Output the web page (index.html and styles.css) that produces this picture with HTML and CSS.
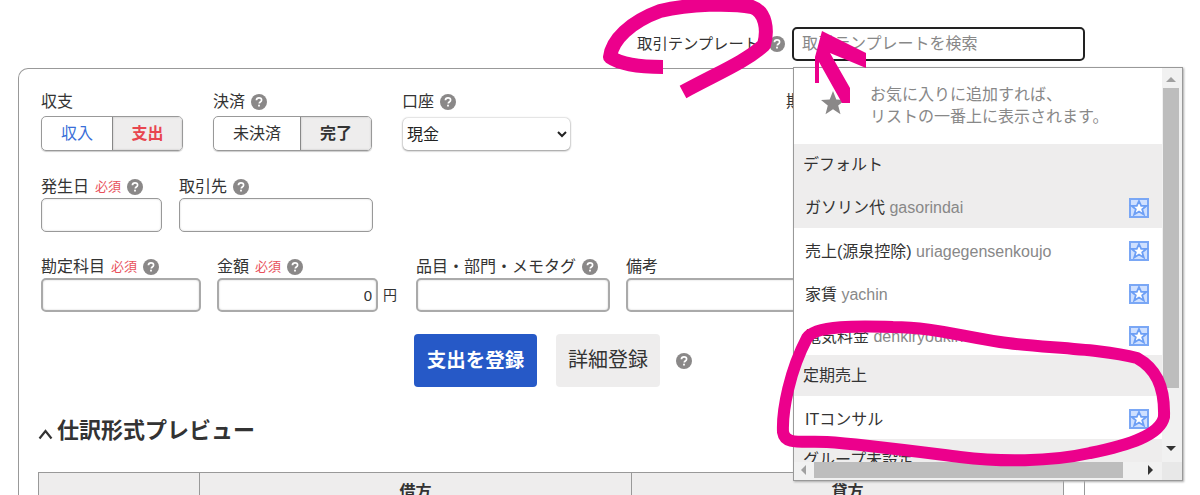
FILE: index.html
```html
<!DOCTYPE html>
<html lang="ja">
<head>
<meta charset="utf-8">
<title>取引テンプレート</title>
<link rel="stylesheet" href="styles.css">
</head>
<body>
<svg width="0" height="0" class="defs">
  <symbol id="help" viewBox="0 0 16 16"><circle cx="8" cy="8" r="8" fill="#8a8888"/><path d="M5.4 6.2C5.5 4.6 6.6 3.8 8 3.8c1.500 0 2.600.9 2.600 2.200 0 1-.6 1.500-1.300 2-.7.5-1 .8-1 1.600" fill="none" stroke="#fff" stroke-width="1.700"/><rect x="7.100" y="10.700" width="1.800" height="1.800" fill="#fff"/></symbol>
  <symbol id="fav" viewBox="0 0 20 20"><rect x="1" y="1" width="18" height="18" fill="#cfe0ff" stroke="#7aa7f5" stroke-width="2"/><path d="M10 3l2.200 4.800h5.200l-4.200 3.400 1.600 5.400-4.800-3-4.800 3 1.600-5.400-4.200-3.400h5.200z" fill="#fff" stroke="#6d9ff5" stroke-width="1.800"/></symbol>
</svg>
<header class="topbar">
  <span class="top-label">取引テンプレート</span>
  <svg class="help"><use href="#help"/></svg>
  <input class="search" placeholder="取引テンプレートを検索">
</header>
<main class="card">
  <div class="row row-1">
    <div class="field">
      <div class="label">収支</div>
      <div class="seg seg-a"><span class="seg-item income">収入</span><span class="seg-item on expense">支出</span></div>
    </div>
    <div class="field">
      <div class="label">決済 <svg class="help"><use href="#help"/></svg></div>
      <div class="seg seg-b"><span class="seg-item pending">未決済</span><span class="seg-item on done">完了</span></div>
    </div>
    <div class="field">
      <div class="label">口座 <svg class="help"><use href="#help"/></svg></div>
      <select class="account"><option>現金</option></select>
    </div>
    <div class="field hidden-field">
      <div class="label">期日</div>
    </div>
  </div>
  <div class="row row-2">
    <div class="field w-date">
      <div class="label">発生日 <em class="req">必須</em> <svg class="help"><use href="#help"/></svg></div>
      <input class="box">
    </div>
    <div class="field w-partner">
      <div class="label">取引先 <svg class="help"><use href="#help"/></svg></div>
      <input class="box">
    </div>
  </div>
  <div class="row row-3">
    <div class="field w-account">
      <div class="label">勘定科目 <em class="req">必須</em> <svg class="help"><use href="#help"/></svg></div>
      <input class="box">
    </div>
    <div class="field w-amount">
      <div class="label">金額 <em class="req">必須</em> <svg class="help"><use href="#help"/></svg></div>
      <div class="amount"><input class="box num" value="0"><span class="yen">円</span></div>
    </div>
    <div class="field w-tags">
      <div class="label">品目・部門・メモタグ <svg class="help"><use href="#help"/></svg></div>
      <input class="box">
    </div>
    <div class="field w-note">
      <div class="label">備考</div>
      <input class="box">
    </div>
  </div>
  <div class="actions">
    <button class="btn primary">支出を登録</button>
    <button class="btn secondary">詳細登録</button>
    <svg class="help"><use href="#help"/></svg>
  </div>
  <h2 class="preview"><svg class="chev" viewBox="0 0 15 12"><path d="M1.500 10.500L7.500 3l6 7.500" fill="none" stroke="#333" stroke-width="2.200"/></svg>仕訳形式プレビュー</h2>
  <div class="table">
    <div class="th"></div><div class="th">借方</div><div class="th">貸方</div>
  </div>
</main>
<aside class="dropdown">
  <div class="list">
    <div class="hint">
      <svg class="big-star" viewBox="0 0 24 24"><path d="M12 0l3.300 8.400 8.700.5-6.800 5.600 2.300 8.700L12 18.300 4.500 23.200l2.300-8.700L0 8.900l8.700-.5z" fill="#8a8888"/></svg>
      <p>お気に入りに追加すれば、<br>リストの一番上に表示されます。</p>
    </div>
    <div class="group">デフォルト</div>
    <div class="item hover"><span>ガソリン代 <i>gasorindai</i></span><svg class="fav"><use href="#fav"/></svg></div>
    <div class="item"><span>売上(源泉控除) <i>uriagegensenkoujo</i></span><svg class="fav"><use href="#fav"/></svg></div>
    <div class="item"><span>家賃 <i>yachin</i></span><svg class="fav"><use href="#fav"/></svg></div>
    <div class="item tight"><span>電気料金 <i>denkiryoukin</i></span><svg class="fav"><use href="#fav"/></svg></div>
    <div class="group short">定期売上</div>
    <div class="item"><span>ITコンサル</span><svg class="fav"><use href="#fav"/></svg></div>
    <div class="group last">グループ未設定</div>
  </div>
  <div class="vbar"><b class="arrow up"></b><div class="vthumb"></div><b class="arrow down"></b></div>
  <div class="hbar"><b class="arrow left"></b><div class="hthumb"></div><b class="arrow right"></b></div>
  <div class="corner"></div>
</aside>
<svg class="ink" viewBox="0 0 1200 495">
  <path d="M663 67C640 67 620 64 610 57C612 40 630 22 660 11C690 4 730 3 752 7C766 12 768 30 764 45C745 62 720 72 683 92" />
  <path class="fill" d="M815 57L822 31L866 53V68L830 53L850 88V103H842L819 62V83H815Z" />
  <path class="loop" d="M807 338C815 325 860 326 893 327C930 327 960 336 1000 342C1040 348 1100 348 1137 358C1155 368 1165 385 1164 417C1160 435 1130 445 1090 453C1050 462 1000 462 960 457C920 452 860 444 827 442C800 441 785 445 783 432C782 410 790 370 807 338Z" />
</svg>
</body>
</html>
```
FILE: styles.css
```css
* { box-sizing: border-box; }
html, body { margin: 0; height: 495px; overflow: hidden; background: #fff; }
body { position: relative; font: 16px/1.2 "Liberation Sans", "Noto Sans CJK JP", sans-serif; color: #333; }
.defs { position: absolute; }
.help { width: 16px; height: 16px; flex: none; }
.topbar { height: 68px; width: 1085px; display: flex; justify-content: flex-end; align-items: flex-start; gap: 7px; padding-top: 27px; }
.top-label { margin: 8px 3px 0 0; font-size: 15.3px; }
.topbar .help { margin-top: 9px; }
.search { width: 293px; height: 34px; border: 2px solid #222; border-radius: 5px; padding: 0 8px; font: inherit; outline: 0; }
.search::placeholder { color: #888; opacity: 1; }
.card { margin-left: 18px; width: 1067px; height: 427px; overflow: hidden; border: 1px solid #999; border-bottom: 0; border-radius: 10px 10px 0 0; padding: 24px 20px 0 22px; }
.row { display: flex; }
.row-1 { gap: 30px; height: 85px; }
.row-2 { gap: 17px; height: 80px; }
.row-3 { gap: 16px; height: 76px; }
.label { height: 20px; padding-bottom: 2px; display: flex; align-items: center; gap: 6px; white-space: nowrap; }
.row-1 .label { height: 23px; padding-bottom: 6px; }
.req { font-style: normal; font-size: 13px; color: #e8505b; }
.seg { display: flex; height: 35px; border: 1px solid #999; border-radius: 5px; overflow: hidden; box-shadow: 0 1px 1px #ccc; }
.seg-item { display: flex; align-items: center; justify-content: center; }
.seg .on { background: #eeeded; border-left: 1px solid #888; font-weight: 700; box-shadow: inset 0 0 2px #bbb; }
.seg-a { width: 142px; }
.seg-a .income { width: 70px; color: #3a6fd8; }
.seg-a .expense { flex: 1; color: #e8464f; }
.seg-b { width: 159px; }
.seg-b .pending { width: 86px; }
.seg-b .done { flex: 1; }
.account { display: block; width: 167px; height: 32px; margin: 2px 0 0 1px; border: 0; border-radius: 5px; background: #fff; box-shadow: 0 0 2px #aaa, 0 1px 2px #999; font: 16px "Liberation Sans", "Noto Sans CJK JP", sans-serif; color: #222; padding-left: 0; }
.hidden-field { margin-left: 186px; }
.box { display: block; width: 100%; height: 34px; border: 1px solid #999; border-radius: 5px; box-shadow: inset 0 0 2px #ccc; font: 15px "Liberation Sans", sans-serif; color: #333; outline: 0; padding: 0 4px; }
.row-3 .box { border: 2px solid #aaa; }
.num { text-align: right; }
.w-date { width: 121px; }
.w-partner { width: 194px; }
.w-account { width: 160px; }
.w-amount { width: 183px; }
.amount { display: flex; align-items: center; gap: 5px; }
.amount .box { width: 161px; flex: none; }
.yen { font-size: 14px; }
.w-tags { width: 194px; }
.w-note { width: 400px; }
.actions { display: flex; align-items: center; margin-left: 373px; height: 53px; }
.btn { height: 53px; padding: 0 0 4px; border: 0; border-radius: 4px; font: 19.5px "Liberation Sans", "Noto Sans CJK JP", sans-serif; }
.primary { width: 123px; background: #2659c7; color: #fff; font-weight: 700; }
.secondary { width: 104px; margin-left: 19px; background: #eeeded; color: #333; font-size: 20px; }
.actions .help { margin-left: 16px; }
.preview { display: flex; align-items: center; margin: 29px 0 0 -4px; padding-top: 2px; font-size: 22px; font-weight: 700; height: 28px; color: #333; }
.chev { width: 15px; height: 12px; margin: 5px 4px 0 1px; flex: none; }
.table { margin: 28px 0 0 -3px; width: 1026px; height: 23px; overflow: hidden; display: grid; grid-template-columns: 160px 432px 1fr; border: 1px solid #999; border-bottom: 0; background: #eeeded; }
.th { border-left: 1px solid #999; text-align: center; font-weight: 700; padding-top: 9px; height: 40px; }
.th:first-child { border-left: 0; }
.dropdown { position: absolute; left: 793px; top: 67px; width: 390px; height: 414px; background: #fff; border: 1px solid #999; box-shadow: 1px 1px 2px #aaa; display: grid; grid-template: 1fr 18px / 1fr 20px; overflow: hidden; }
.list { overflow: hidden; min-width: 0; min-height: 0; }
.hint { height: 76px; display: flex; align-items: center; gap: 25px; padding-left: 27px; color: #888; line-height: 22px; }
.hint p { margin: 0; white-space: nowrap; }
.big-star { width: 24px; height: 24px; margin-top: -6px; flex: none; }
.group { background: #eeeded; height: 40px; display: flex; align-items: center; padding: 1px 0 0 9px; }
.group.short { height: 41px; }
.item { height: 43px; display: flex; justify-content: space-between; align-items: center; padding: 0 13px 0 11px; }
.item span { padding-top: 4px; }
.item.tight { height: 41px; }
.item.hover { height: 44px; background: #eeeded; }
.item i { font-style: normal; color: #888; }
.fav { width: 20px; height: 20px; margin-top: 3px; }
.vbar { position: relative; background: #f1f1f1; display: flex; flex-direction: column; align-items: center; }
.vthumb { width: 16px; height: 300px; background: #bdbdbd; margin: 20px 2px 0 0; }
.hbar { background: #f1f1f1; display: flex; align-items: center; padding-bottom: 2px; }
.hthumb { width: 309px; height: 16px; background: #bdbdbd; margin-left: 8px; }
.corner { background: #e8e8e8; }
.arrow { width: 0; height: 0; border: 5px solid transparent; flex: none; }
.arrow.up { border-bottom-color: #a0a0a0; position: absolute; top: 4px; left: 4px; }
.arrow.down { border-top-color: #333; position: absolute; bottom: 6px; left: 4px; }
.arrow.left { border-right-color: #a0a0a0; margin-left: 2px; }
.arrow.right { border-left-color: #333; margin-left: 25px; }
.ink { position: absolute; inset: 0; width: 1200px; height: 495px; pointer-events: none; }
.ink path { fill: none; stroke: #ec008c; stroke-width: 14; stroke-linejoin: round; }
.ink path.fill { fill: #ec008c; stroke: none; }
.ink path.loop { stroke-width: 12; }
```
